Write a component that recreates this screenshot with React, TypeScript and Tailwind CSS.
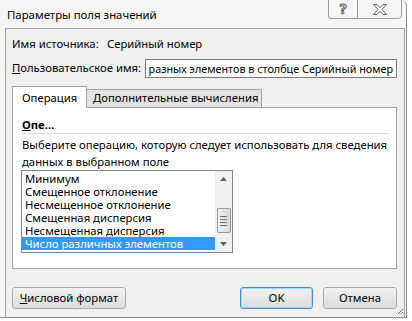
const items = [
  'Минимум',
  'Смещенное отклонение',
  'Несмещенное отклонение',
  'Смещенная дисперсия',
  'Несмещенная дисперсия',
  'Число различных элементов',
];

function TitleButtons() {
  return (
    <div className="absolute top-[-1px] right-[4px] flex h-[20px]">
      <div className="w-[29px] h-full border border-[#9c9c9c] border-r-0 rounded-bl-[4px] flex items-center justify-center">
        <span className="text-[14px] leading-none font-bold text-white [-webkit-text-stroke:1px_#5a5a5a]">?</span>
      </div>
      <div className="w-[45px] h-full border border-[#9c9c9c] rounded-br-[4px] flex items-center justify-center">
        <svg width="14" height="11" viewBox="0 0 14 11">
          <path
            d="M0.5 0.5 H4 L7 3.8 L10 0.5 H13.5 L9 5.5 L13.5 10.5 H10 L7 7.2 L4 10.5 H0.5 L5 5.5 Z"
            fill="#fff"
            stroke="#5a5a5a"
            strokeWidth="1"
          />
        </svg>
      </div>
    </div>
  );
}

function Button({ children, wide, primary }: { children: React.ReactNode; wide?: string; primary?: boolean }) {
  return (
    <div
      className={
        'h-[22px] rounded-[3px] flex items-center justify-center bg-gradient-to-b from-[#f2f2f2] to-[#dcdcdc] ' +
        (primary ? 'border border-[#3c8fd6] shadow-[inset_0_0_0_1px_#a6d6f4] ' : 'border border-[#acacac] ') +
        wide
      }
    >
      {children}
    </div>
  );
}

export default function App() {
  return (
    <div className="w-[412px] h-[321px] bg-white overflow-hidden text-[11.3px] text-black whitespace-nowrap font-['Noto_Sans',sans-serif]">
      <div className="relative w-[407px] h-[318px] bg-[#f6f6f6] border-r border-b border-[#8e8e8e] rounded-tr-[6px] flex flex-col">
        <div className="relative h-[28px] shrink-0">
          <div className="pl-[7px] pt-[6px] text-[11.4px] leading-[18px]">Параметры поля значений</div>
          <TitleButtons />
        </div>

        <div className="ml-[5px] w-[400px] flex-1 bg-[#f0f0f0] border-l border-t border-r border-[#a3a3a3] flex flex-col pl-[6px] pr-[7px]">
          <div className="mt-[7px] h-[16px] flex items-center leading-[16px]">
            <span className="w-[95px]">Имя источника:</span>
            <span>Серийный номер</span>
          </div>

          <div className="mt-[7px] h-[19px] flex items-center">
            <span className="w-[133px]">
              <span className="underline">П</span>ользовательское имя:
            </span>
            <div className="w-[252px] h-[19px] bg-white border border-[#7a7a7a] overflow-hidden flex items-center justify-end pr-[3px]">
              <span className="shrink-0 text-[10.8px] leading-[17px]">Число разных элементов в столбце Серийный номер</span>
            </div>
          </div>

          <div className="mt-[8px] relative z-10 h-[21px] flex items-end">
            <div className="w-[75px] h-[22px] mb-[-1px] bg-white border-l border-t border-r border-[#a3a3a3] pl-[9px] pt-[3px] leading-[16px]">
              Операция
            </div>
            <div className="w-[175px] h-[18px] bg-[#e3e3e3] border-t border-r border-[#a3a3a3] pl-[6px] leading-[16px]">
              Дополнительные вычисления
            </div>
          </div>

          <div className="w-[385px] h-[162px] bg-white border border-[#a3a3a3] flex flex-col pl-[9px]">
            <div className="mt-[9px] h-[16px] leading-[16px] font-bold">
              <span className="underline">О</span>пе...
            </div>
            <div className="w-[367px] h-[1px] bg-[#dcdcdc]" />
            <div className="mt-[2px] leading-[17px]">
              Выберите операцию, которую следует использовать для сведения
              <br />
              данных в выбранном поле
            </div>
            <div className="ml-[-1px] w-[212px] h-[83px] border border-[#828790] flex">
              <div className="w-[193px] pt-[1px] flex flex-col">
                {items.map((it, i) => (
                  <div
                    key={it}
                    className={
                      'h-[13px] leading-[13px] pl-[3px] ' +
                      (i === items.length - 1 ? 'bg-[#3399ff] text-white' : '')
                    }
                  >
                    {it}
                  </div>
                ))}
              </div>
              <div className="w-[17px] bg-[#f0f0f0] flex flex-col items-center">
                <svg className="mt-[6px]" width="7" height="4" viewBox="0 0 7 4">
                  <path d="M0 4 L3.5 0 L7 4 Z" fill="#606060" />
                </svg>
                <div className="mt-[27px] w-[14px] h-[25px] rounded-[2px] border border-[#9a9a9a] bg-gradient-to-r from-[#f0f0f0] to-[#d8d8d8] flex flex-col items-center justify-center gap-[2px]">
                  <div className="w-[7px] h-[1px] bg-[#707070]" />
                  <div className="w-[7px] h-[1px] bg-[#707070]" />
                  <div className="w-[7px] h-[1px] bg-[#707070]" />
                  <div className="w-[7px] h-[1px] bg-[#707070]" />
                </div>
                <svg className="mt-[9px]" width="7" height="4" viewBox="0 0 7 4">
                  <path d="M0 0 L3.5 4 L7 0 Z" fill="#606060" />
                </svg>
              </div>
            </div>
          </div>

          <div className="mt-[18px] flex items-center">
            <Button wide="w-[114px]">
              <span>
                <span className="underline">Ч</span>исловой формат
              </span>
            </Button>
            <div className="flex-1" />
            <Button wide="w-[73px]" primary>
              OK
            </Button>
            <div className="w-[10px]" />
            <Button wide="w-[74px]">Отмена</Button>
          </div>
        </div>

        <svg className="absolute right-[2px] bottom-[2px]" width="7" height="7" viewBox="0 0 7 7">
          <path d="M6 1 L1 6 M6 4 L4 6" stroke="#6a6a6a" strokeWidth="1" />
        </svg>
      </div>
    </div>
  );
}
